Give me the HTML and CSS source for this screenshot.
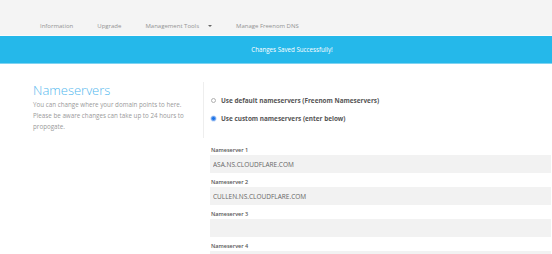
FILE: index.html
```html
<!DOCTYPE html>
<html lang="en">
<head>
    <meta charset="UTF-8">
    <meta name="viewport" content="width=device-width, initial-scale=1.0">
    <title>Nameservers</title>
    <link rel="stylesheet" href="styles.css">
</head>
<body>
    <div class="nav">
        <a class="nav-item" href="#">Information</a>
        <a class="nav-item" href="#">Upgrade</a>
        <a class="nav-item" href="#">Management Tools <span class="caret"></span></a>
        <a class="nav-item" href="#">Manage Freenom DNS</a>
    </div>

    <div class="banner">Changes Saved Successfully!</div>

    <div class="main">
        <div class="side">
            <h1>Nameservers</h1>
            <p>You can change where your domain points to here. Please be aware changes can take up to 24 hours to propogate.</p>
        </div>

        <div class="content">
            <label class="radio-row">
                <input type="radio" name="ns" class="radio">
                Use default nameservers (Freenom Nameservers)
            </label>
            <label class="radio-row">
                <input type="radio" name="ns" class="radio" checked>
                Use custom nameservers (enter below)
            </label>

            <div class="fields">
                <div class="field">
                    <div class="field-label">Nameserver 1</div>
                    <input class="field-input" type="text" value="ASA.NS.CLOUDFLARE.COM">
                </div>
                <div class="field">
                    <div class="field-label">Nameserver 2</div>
                    <input class="field-input" type="text" value="CULLEN.NS.CLOUDFLARE.COM">
                </div>
                <div class="field">
                    <div class="field-label">Nameserver 3</div>
                    <input class="field-input" type="text" value="">
                </div>
                <div class="field">
                    <div class="field-label">Nameserver 4</div>
                    <input class="field-input" type="text" value="">
                </div>
            </div>
        </div>
    </div>
</body>
</html>
```
FILE: styles.css
```css
body {
    margin: 0;
    font-family: "Open Sans", "Liberation Sans", sans-serif;
    background: #ffffff;
    overflow: hidden;
}

.nav {
    display: flex;
    gap: 24px;
    height: 8px;
    padding: 22px 0 5px 40px;
    background: #f4f4f4;
    border-bottom: 1px solid #fbfbfb;
}

.nav-item {
    font-size: 6px;
    line-height: 8px;
    color: #939393;
    text-decoration: none;
    display: flex;
    align-items: center;
}

.caret {
    display: inline-block;
    width: 0;
    height: 0;
    margin-left: 9px;
    border-left: 2px solid transparent;
    border-right: 2px solid transparent;
    border-top: 2px solid #666;
}

.banner {
    height: 27px;
    padding-left: 32px;
    background: #25b8ea;
    border-bottom: 1px solid #7fd3f1;
    color: #ffffff;
    font-size: 6.2px;
    display: flex;
    align-items: center;
    justify-content: center;
}

.main {
    display: flex;
    align-items: flex-start;
}

.side {
    width: 170px;
    padding: 0 0 6px 33px;
    margin-top: 18px;
    border-right: 1px solid #eeeeee;
}

.side h1 {
    margin: 0;
    font-size: 13px;
    line-height: 16px;
    font-weight: 300;
    color: #52b8ee;
}

.side p {
    margin: 0;
    font-size: 6.25px;
    line-height: 11px;
    color: #9a9a9a;
    padding: 1px 4px 0 0;
}

.content {
    flex: 1;
    margin: 27px 1px 0 6px;
}

.radio-row {
    display: flex;
    align-items: center;
    height: 18px;
    padding-left: 1px;
    font-size: 6.4px;
    font-weight: 700;
    color: #555555;
}

.radio {
    appearance: none;
    width: 5px;
    height: 5px;
    margin: 0 5px 0 0;
    border: 0.7px solid #b0b0b0;
    border-radius: 50%;
    background: #ffffff;
}

.radio:checked {
    background: #1a73e8;
    border-color: #6fa3ee;
    box-shadow: 0 0 0 0.6px #c3d8f7;
}

.fields {
    margin-top: 19px;
}

.field {
    margin-bottom: 5px;
}

.field-label {
    font-size: 5.5px;
    line-height: 8px;
    font-weight: 600;
    color: #555555;
    margin-bottom: 1px;
    padding-left: 1px;
}

.field-input {
    display: block;
    box-sizing: border-box;
    width: 100%;
    height: 18px;
    margin: 0;
    padding: 0 3px;
    border: none;
    background: #f2f2f2;
    font-family: "Open Sans", "Liberation Sans", sans-serif;
    font-size: 6.5px;
    color: #666666;
    outline: none;
}
```
